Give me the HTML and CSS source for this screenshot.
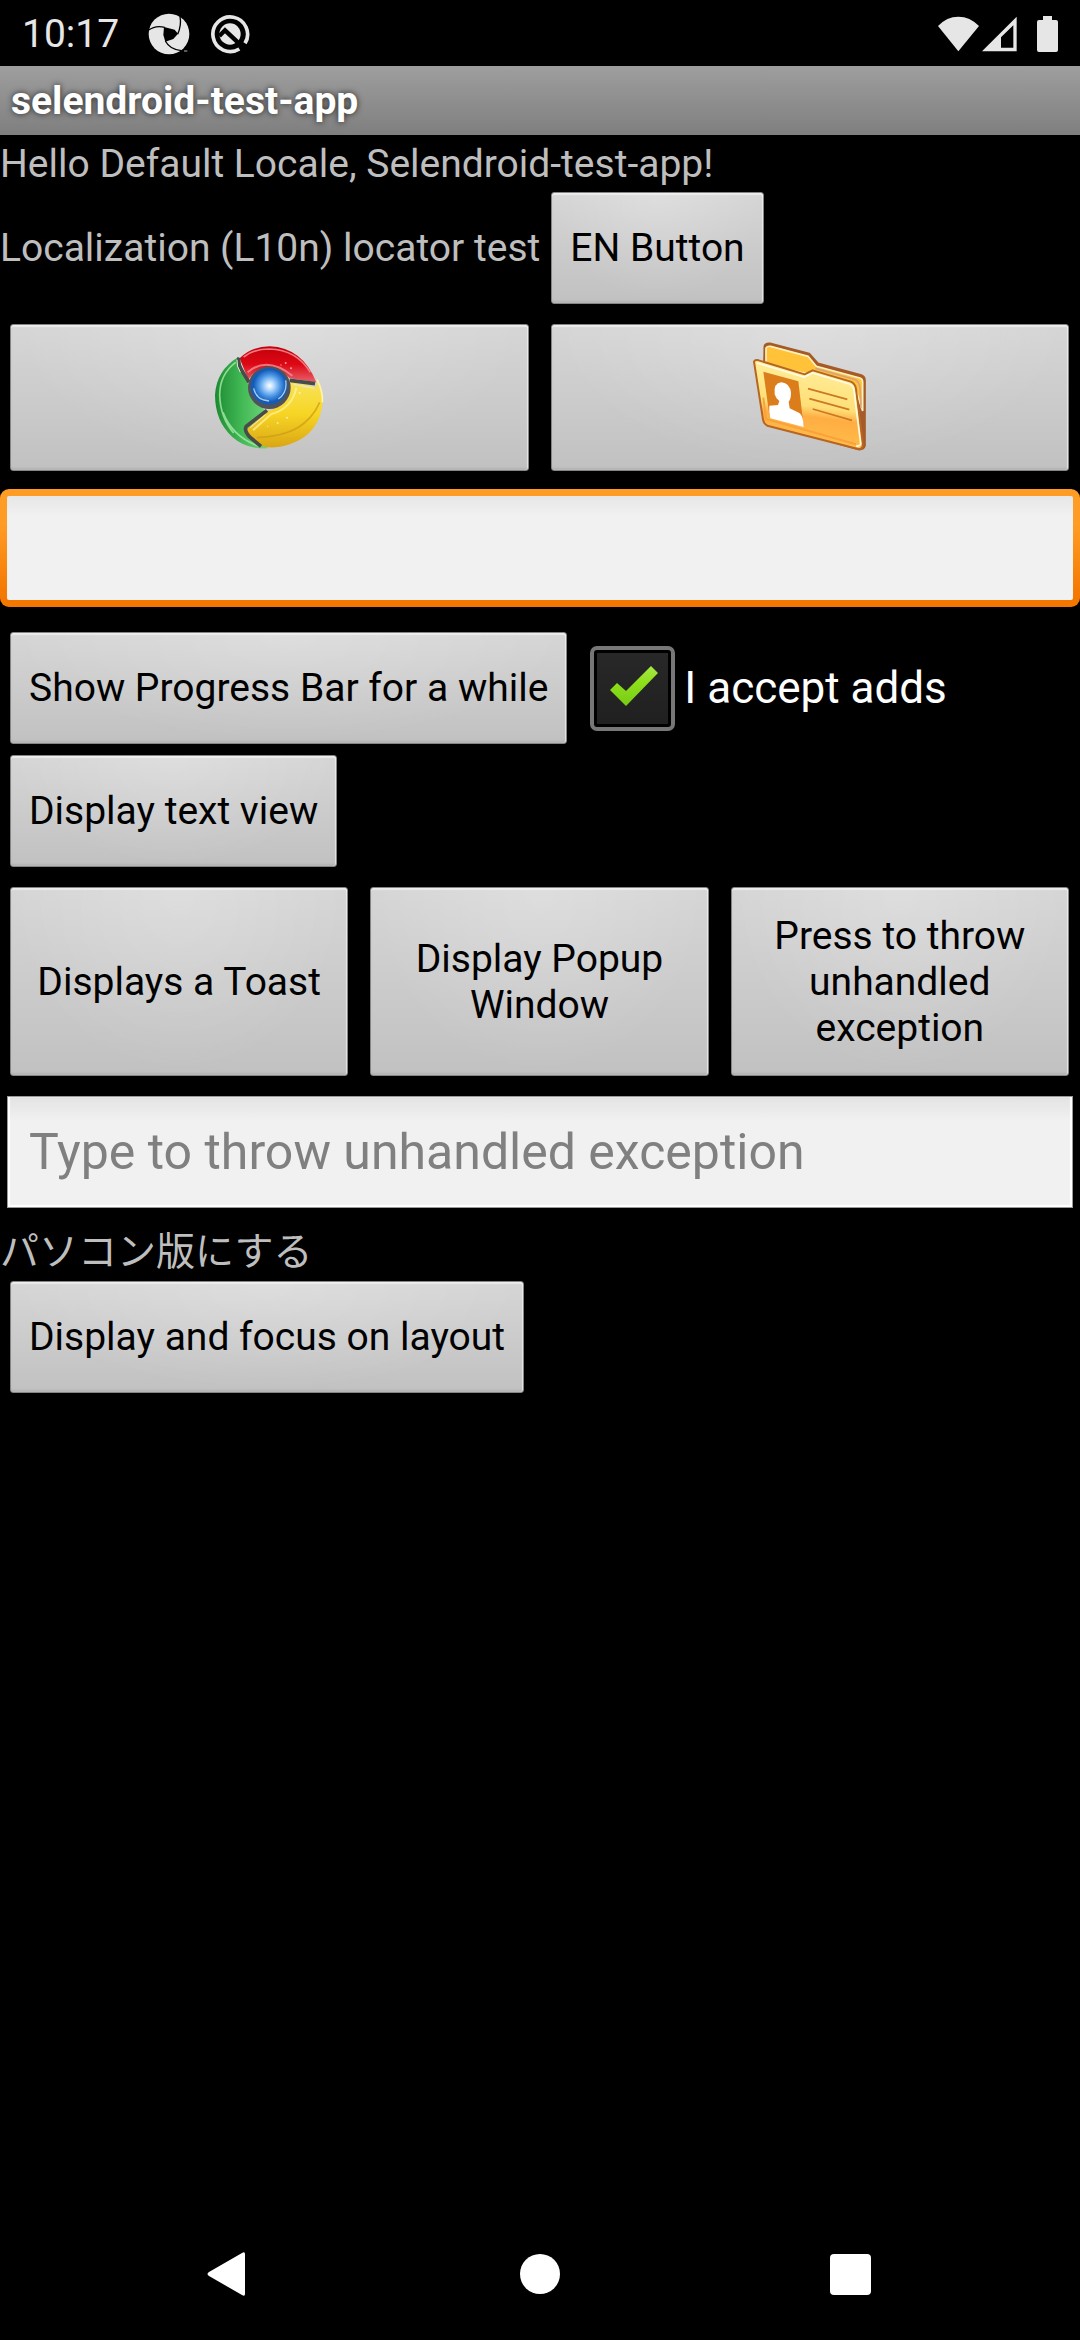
FILE: index.html
```html
<!DOCTYPE html>
<html lang="en">
<head>
<meta charset="utf-8">
<meta name="viewport" content="width=device-width">
<title>selendroid-test-app</title>
<link rel="stylesheet" href="styles.css">
</head>
<body>
<header class="status">
  <span class="clock">10:17</span>
  <svg class="status-pinwheel" width="42" height="42" viewBox="0 0 126 126" aria-hidden="true">
    <circle cx="63" cy="63" r="61" fill="#e6e6e6"/>
    <path d="M48 42 L80 50 L90 62 L76 78 L52 86 L46 66 Z" fill="#000"/>
    <g fill="none" stroke="#000" stroke-width="4">
      <path d="M1 52 Q22 36 50 43"/>
      <path d="M96 10 Q101 36 89 64"/>
      <path d="M52 84 Q66 110 100 113"/>
    </g>
    <path d="M108 112h10v4h-10z" fill="#888"/>
  </svg>
  <svg class="status-q" width="40" height="40" viewBox="0 0 120 120" aria-hidden="true">
    <path d="M88 105 A52 52 0 1 1 105 88" fill="none" stroke="#e6e6e6" stroke-width="11"/>
    <circle cx="60" cy="60" r="32" fill="#e6e6e6"/>
    <path d="M28 66 L45 49 L106 106" fill="none" stroke="#000" stroke-width="13"/>
  </svg>
  <span class="status-space"></span>
  <svg class="status-wifi" width="41" height="36" viewBox="0 0 123 108" aria-hidden="true"><path d="M0 30 Q26 2 61 2 T123 30 L61 106Z" fill="#e6e6e6"/></svg>
  <svg class="status-signal" width="35" height="36" viewBox="0 0 105 108" aria-hidden="true"><path fill-rule="evenodd" d="M104 2V106H0Z M94 28 L57 64 V95 H94Z" fill="#e6e6e6"/></svg>
  <svg class="status-battery" width="21" height="36" viewBox="0 0 21 36" aria-hidden="true"><path d="M6 0h9v4h4q2 0 2 2v28q0 2-2 2H2q-2 0-2-2V6q0-2 2-2h4z" fill="#e6e6e6"/></svg>
</header>
<h1 class="title">selendroid-test-app</h1>
<main class="content">
  <p class="text hello">Hello Default Locale, Selendroid-test-app!</p>
  <div class="row locale">
    <span class="text">Localization (L10n) locator test</span>
    <button class="btn">EN Button</button>
  </div>
  <div class="row split pictures">
    <button class="btn" aria-label="Open web view">
      <svg width="112" height="114" viewBox="40 60 336 342" aria-hidden="true">
        <defs>
          <radialGradient id="blue"><stop offset="0" stop-color="#fff"/><stop offset=".25" stop-color="#b8dcff"/><stop offset=".65" stop-color="#4a94e4"/><stop offset="1" stop-color="#0d57b4"/></radialGradient>
          <linearGradient id="red" x1="0" y1="0" x2="0" y2="1"><stop offset="0" stop-color="#c4000c"/><stop offset=".5" stop-color="#dd0814"/><stop offset="1" stop-color="#e8626c"/></linearGradient>
          <linearGradient id="yellow" x1="0" y1="0" x2="0" y2="1"><stop offset="0" stop-color="#f8e45c"/><stop offset=".5" stop-color="#f7d524"/><stop offset="1" stop-color="#d9a614"/></linearGradient>
          <linearGradient id="green"><stop offset="0" stop-color="#1d8a32"/><stop offset=".5" stop-color="#42b955"/><stop offset="1" stop-color="#72d57a"/></linearGradient>
        </defs>
        <path d="M116 108 Q50 148 46 222 Q46 300 98 348 Q140 386 206 382 L140 330 L196 270 L146 192Z" fill="url(#green)"/>
        <path d="M108 124 Q60 160 60 222 Q62 290 102 336 M70 274 Q100 350 180 376" fill="none" stroke="#a6eba9" stroke-width="5" opacity=".8"/>
        <path d="M120 112 Q156 76 210 76 Q308 80 350 184 L270 172 Q240 138 206 140 Q170 140 146 176Z" fill="url(#red)"/>
        <path d="M132 108 Q160 84 210 84 Q290 86 332 154" fill="none" stroke="#f07a80" stroke-width="5"/>
        <path d="M144 154 Q202 104 278 164" fill="none" stroke="#f4a0a6" stroke-width="6" opacity=".7"/>
        <path d="M272 182 L350 198 L352 178 Q370 210 369 244 Q360 340 270 370 Q220 386 190 376 Q146 360 142 324 L204 270 Q260 260 272 182Z" fill="url(#yellow)"/>
        <path d="M160 328 L214 280 Q278 262 290 200" fill="none" stroke="#fff3a6" stroke-width="6" opacity=".7"/>
        <path d="M172 350 Q250 346 294 320 T360 244" fill="none" stroke="#c99a16" stroke-width="5" opacity=".7"/>
        <path d="M352 176 Q370 210 368 244" fill="none" stroke="#fff4ae" stroke-width="5"/>
        <path d="M118 110 Q114 130 126 148 L148 184 M270 178 L346 188 M202 268 L140 316 Q132 328 150 348 L184 376" fill="none" stroke="#494b49" stroke-width="11"/>
        <path d="M112 116 Q110 136 122 154 M282 190 L344 202 M152 320 L198 280" fill="none" stroke="#e8e8dc" stroke-width="3"/>
        <circle cx="209" cy="200" r="64" fill="#50545a"/>
        <circle cx="208" cy="196" r="55" fill="#165bb4"/>
        <circle cx="210" cy="194" r="50" fill="url(#blue)"/>
        <path d="M162 202 Q170 238 208 240 M258 178 Q264 214 236 234" fill="none" stroke="#a6cdec" stroke-width="4"/>
        <g fill="#fff" opacity=".6"><circle cx="258" cy="126" r="3"/><circle cx="274" cy="142" r="3"/><circle cx="244" cy="132" r="2"/><circle cx="262" cy="290" r="3"/><circle cx="234" cy="306" r="3"/><circle cx="300" cy="216" r="3"/><circle cx="204" cy="316" r="2"/></g>
      </svg>
    </button>
    <button class="btn" aria-label="Register a new user">
      <svg width="120" height="114" viewBox="58 60 360 342" aria-hidden="true">
        <defs>
          <linearGradient id="front" x1=".6" y1="0" x2=".45" y2="1"><stop offset="0" stop-color="#fff0a0"/><stop offset=".52" stop-color="#ffdf76"/><stop offset=".64" stop-color="#ffad43"/><stop offset="1" stop-color="#ffc14a"/></linearGradient>
        </defs>
        <path d="M101 76 Q103 66 118 67 L236 98 L262 127 L392 162 Q403 166 403 178 L403 374 Q400 386 386 386 L120 310 L100 130Z" fill="#a55a2b" stroke="#a65b25" stroke-width="5" stroke-linejoin="round"/>
        <path d="M106 82 Q108 75 120 76 L232 106 L257 136 L388 171 Q396 173 396 184 L396 270 L370 190 L240 160 L106 134Z" fill="#ffc238" stroke="#fff0bd" stroke-width="5"/>
        <path d="M254 142 L374 176 Q386 184 388 200 L391 262" fill="none" stroke="#d5a47c" stroke-width="5"/>
        <path d="M70 122 Q73 115 84 118 L222 160 L246 148 L360 182 Q374 188 376 204 L397 372 Q396 385 382 384 L110 314 Q99 308 97 296Z" fill="url(#front)" stroke="#b76520" stroke-width="6" stroke-linejoin="round"/>
        <path d="M79 126 L220 168 L246 156 L356 189 Q368 194 370 208 L390 368 Q388 377 376 375" fill="none" stroke="#fffbe4" stroke-width="5"/>
        <path d="M98 230 L106 294 L376 370" fill="none" stroke="#f9a23b" stroke-width="6"/>
        <path d="M98 152 L203 181 L219 316 L116 282Z" fill="#dc7d1c"/>
        <path d="M132 220 Q128 186 152 184 Q178 186 181 216 Q181 236 174 242 L177 262 L206 276 Q218 284 219 318 L119 292 Q114 270 116 254 L142 252 L146 240 Q136 234 132 220Z" fill="#fff"/>
        <path d="M232 203 L350 235 M236 233 L356 266 M246 264 L364 298" fill="none" stroke="#cd7924" stroke-width="5"/>
      </svg>
    </button>
  </div>
  <input class="field focused" type="text" aria-label="Text field">
  <div class="row progress">
    <button class="btn">Show Progress Bar for a while</button>
    <label class="check">
      <span class="check-box">
        <input class="check-input" type="checkbox" checked>
        <svg class="check-mark" width="50" height="42" viewBox="0 0 50 42" aria-hidden="true">
          <defs><linearGradient id="tick" x1="0" y1="0" x2="0" y2="1"><stop offset="0" stop-color="#a8e84a"/><stop offset=".4" stop-color="#8fe01c"/><stop offset="1" stop-color="#76cb14"/></linearGradient></defs>
          <path d="M1 25 L8 18 L17 26 L42 1 L49 8 L17 41Z" fill="url(#tick)"/>
        </svg>
      </span>
      I accept adds
    </label>
  </div>
  <div class="row single"><button class="btn">Display text view</button></div>
  <div class="row split triple">
    <button class="btn">Displays a Toast</button>
    <button class="btn">Display Popup Window</button>
    <button class="btn">Press to throw unhandled exception</button>
  </div>
  <input class="field plain" type="text" placeholder="Type to throw unhandled exception" aria-label="Type to throw unhandled exception">
  <p class="text japanese" lang="ja">パソコン版にする</p>
  <div class="row"><button class="btn">Display and focus on layout</button></div>
</main>
<nav class="nav">
  <button class="nav-btn" aria-label="Back"><svg width="48" height="48" viewBox="0 0 48 48" aria-hidden="true"><path d="M3 22 L36 3 Q39 1 39 4 V44 Q39 47 36 45 L3 26 Q0 24 3 22Z" fill="#fff"/></svg></button>
  <button class="nav-btn" aria-label="Home"><svg width="48" height="48" viewBox="0 0 48 48" aria-hidden="true"><circle cx="24" cy="24" r="20" fill="#fff"/></svg></button>
  <button class="nav-btn" aria-label="Overview"><svg width="48" height="48" viewBox="0 0 48 48" aria-hidden="true"><rect x="4" y="4" width="41" height="41" rx="4" fill="#fff"/></svg></button>
</nav>
</body>
</html>
```
FILE: styles.css
```css
* { box-sizing: border-box; }

body {
  margin: 0;
  min-height: 100vh;
  display: flex;
  flex-direction: column;
  background: #000;
  color: #bebebe;
  font: 39px/46px Roboto, "Noto Sans CJK JP", sans-serif;
}

button, input { font: inherit; }

.status {
  display: flex;
  align-items: center;
  height: 66px;
  padding: 1px 22px 0;
  color: #e6e6e6;
}
.status-pinwheel { margin-left: 29px; }
.status-q { margin-left: 20px; }
.status-space { flex: 1; }
.status-signal { margin-left: 3px; }
.status-battery { margin-left: 20px; }

.title {
  margin: 0;
  padding: 12px 11px 11px;
  background: linear-gradient(#9e9e9e, #7f7f7f);
  color: #fff;
  font-size: 39px;
  font-weight: 700;
  line-height: 46px;
  text-shadow: 0 0 6px rgba(0, 0, 0, 0.75);
}

.content { flex: 1; }

.text { margin: 0; }
.hello { padding: 6px 0 5px; }
.japanese { padding: 21px 0 6px; }

.row {
  display: flex;
  align-items: center;
  padding: 0 11px 0 10px;
}
.locale { padding: 0; gap: 11px; }
.split { align-items: stretch; gap: 22px; }
.split .btn { flex: 1 1 0; }

.btn {
  display: flex;
  align-items: center;
  justify-content: center;
  min-height: 112px;
  padding: 10px 18px;
  border: 1px solid #858585;
  border-radius: 3px;
  background: radial-gradient(ellipse at 50% 0, rgba(255, 255, 255, 0.2), rgba(255, 255, 255, 0) 70%), linear-gradient(#d6d6d6, #c1c1c1);
  box-shadow: inset 0 2px 1px rgba(255, 255, 255, 0.5), inset -1px 0 1px rgba(255, 255, 255, 0.6), inset 0 -2px 2px rgba(0, 0, 0, 0.08);
  color: #000;
  text-align: center;
}

.pictures { margin: 20px 0 18px; }
.pictures .btn { min-height: 147px; }
.single { margin: 11px 0 20px; }
.triple { margin-bottom: 20px; }
.triple .btn { min-height: 189px; }

.field {
  display: block;
  width: 100%;
  padding: 0 21px;
  color: #000;
  font-size: 50px;
  outline: none;
}
.focused {
  height: 118px;
  border: 7px solid transparent;
  border-radius: 9px;
  background: linear-gradient(#e7e7e7, #f1f1f1 20px) padding-box, linear-gradient(#ff9c26 30%, #f47700 90%) border-box;
}
.plain {
  width: calc(100% - 14px);
  height: 112px;
  margin: 0 7px;
  border: 1px solid #999;
  background: linear-gradient(#e3e3e3, #f1f1f1 24px);
  box-shadow: inset 0 -2px 1px #fff, inset 2px 0 1px #fff, inset -2px 0 1px #fff;
}
.field::placeholder { color: #808080; opacity: 1; }

.progress { margin-top: 25px; gap: 23px; }

.check {
  display: flex;
  align-items: center;
  gap: 9px;
  color: #fff;
  font-size: 44px;
}
.check-box { display: grid; place-items: center; }
.check-input {
  grid-area: 1 / 1;
  appearance: none;
  width: 85px;
  height: 85px;
  margin: 0;
  padding: 3px;
  border: 4px solid #777;
  border-radius: 7px;
  background: linear-gradient(#282828, #202020) content-box, #000;
}
.check-mark { grid-area: 1 / 1; margin: 0 0 4px 3px; pointer-events: none; }

.nav {
  display: flex;
  justify-content: center;
  gap: 262px;
  padding: 42px 0;
}
.nav-btn {
  display: flex;
  padding: 0;
  border: 0;
  background: none;
}
```
